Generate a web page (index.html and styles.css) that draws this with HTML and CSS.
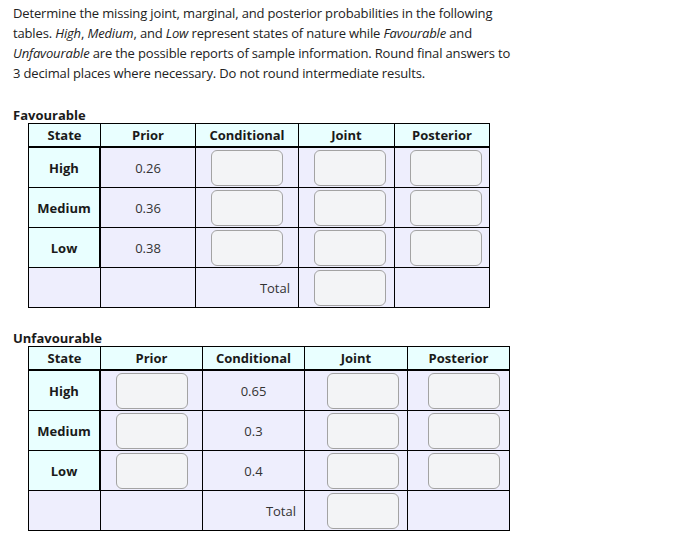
FILE: index.html
```html
<!DOCTYPE html>
<html>
<head>
<meta charset="utf-8">
<link rel="stylesheet" href="styles.css">
</head>
<body>
<div class="page">
  <p class="intro">Determine the missing joint, marginal, and posterior probabilities in the following tables. <em>High</em>, <em>Medium</em>, and <em>Low</em> represent states of nature while <em>Favourable</em> and <em>Unfavourable</em> are the possible reports of sample information. Round final answers to 3 decimal places where necessary. Do not round intermediate results.</p>

  <div class="label">Favourable</div>
  <table class="grid t1">
    <colgroup>
      <col class="c-state"><col class="c1-prior"><col class="c1-cond"><col class="c1-joint"><col class="c1-post">
    </colgroup>
    <thead>
      <tr><th class="h-state">State</th><th>Prior</th><th>Conditional</th><th>Joint</th><th>Posterior</th></tr>
    </thead>
    <tbody>
      <tr><td class="state">High</td><td>0.26</td><td class="in"><input type="text"></td><td class="in"><input type="text"></td><td class="in"><input type="text"></td></tr>
      <tr><td class="state">Medium</td><td>0.36</td><td class="in"><input type="text"></td><td class="in"><input type="text"></td><td class="in"><input type="text"></td></tr>
      <tr><td class="state">Low</td><td>0.38</td><td class="in"><input type="text"></td><td class="in"><input type="text"></td><td class="in"><input type="text"></td></tr>
      <tr class="total"><td class="blank"></td><td></td><td class="tot">Total</td><td class="in"><input type="text"></td><td></td></tr>
    </tbody>
  </table>

  <div class="label label2">Unfavourable</div>
  <table class="grid t2">
    <colgroup>
      <col class="c-state"><col class="c2-prior"><col class="c2-cond"><col class="c2-joint"><col class="c2-post">
    </colgroup>
    <thead>
      <tr><th class="h-state">State</th><th>Prior</th><th>Conditional</th><th>Joint</th><th>Posterior</th></tr>
    </thead>
    <tbody>
      <tr><td class="state">High</td><td class="in"><input type="text"></td><td>0.65</td><td class="in wide"><input type="text"></td><td class="in wide2"><input type="text"></td></tr>
      <tr><td class="state">Medium</td><td class="in"><input type="text"></td><td>0.3</td><td class="in wide"><input type="text"></td><td class="in wide2"><input type="text"></td></tr>
      <tr><td class="state">Low</td><td class="in"><input type="text"></td><td>0.4</td><td class="in wide"><input type="text"></td><td class="in wide2"><input type="text"></td></tr>
      <tr class="total"><td class="blank"></td><td></td><td class="tot">Total</td><td class="in wide"><input type="text"></td><td></td></tr>
    </tbody>
  </table>
</div>
</body>
</html>
```

FILE: styles.css
```css
html, body {
  margin: 0;
  padding: 0;
  background: #ffffff;
}

.page {
  padding: 3px 13px 0 13px;
  font-family: "Open Sans", "Noto Sans", sans-serif;
  color: #222222;
}

.intro {
  margin: 0;
  font-size: 13px;
  letter-spacing: -0.15px;
  line-height: 20px;
  width: 502px;
}

.intro em {
  font-style: italic;
}

.label {
  margin-top: 24px;
  font-size: 13px;
  font-weight: 700;
  line-height: 16px;
  color: #1a1a1a;
}

.label2 {
  margin-top: 22px;
}

.grid {
  margin-left: 15px;
  border-collapse: separate;
  border-spacing: 0;
  table-layout: fixed;
  border-left: 1px solid #000;
  border-top: 1px solid #000;
  font-size: 13px;
}

.t1 { width: 462px; }
.t2 { width: 482px; }

.c-state { width: 72px; }
.c1-prior { width: 95px; }
.c1-cond { width: 103px; }
.c1-joint { width: 96px; }
.c1-post { width: 95px; }

.c2-prior { width: 102px; }
.c2-cond { width: 102px; }
.c2-joint { width: 103px; }
.c2-post { width: 102px; }

.grid th,
.grid td {
  box-sizing: border-box;
  border-right: 1px solid #000;
  border-bottom: 1px solid #000;
  padding: 0;
  text-align: center;
  vertical-align: middle;
}

.grid th {
  height: 24px;
  background: #e9ffff;
  font-weight: 700;
  color: #1a1a1a;
  border-bottom: 2px solid #000;
}

.grid td {
  height: 40px;
  background: #eeeefd;
  color: #333333;
}

.grid td.state {
  background: #e9ffff;
  border-right: 2px solid #000;
  font-weight: 700;
  color: #1a1a1a;
}

.grid tr.total td.blank {
  background: #eeeefd;
  border-right: 1px solid #000;
}

.grid td.in {
  text-align: left;
  padding-left: 15px;
  line-height: 0;
}

.grid td.in.wide { padding-left: 22px; }
.grid td.in.wide2 { padding-left: 20px; }

.grid td.tot {
  text-align: right;
  padding-right: 8px;
}

.grid input {
  box-sizing: border-box;
  width: 72px;
  height: 36px;
  margin: 0;
  padding: 0 6px;
  border: 1px solid #a3a3a3;
  border-radius: 6px;
  background: #f3f4f6;
  font: inherit;
  vertical-align: middle;
}
```
